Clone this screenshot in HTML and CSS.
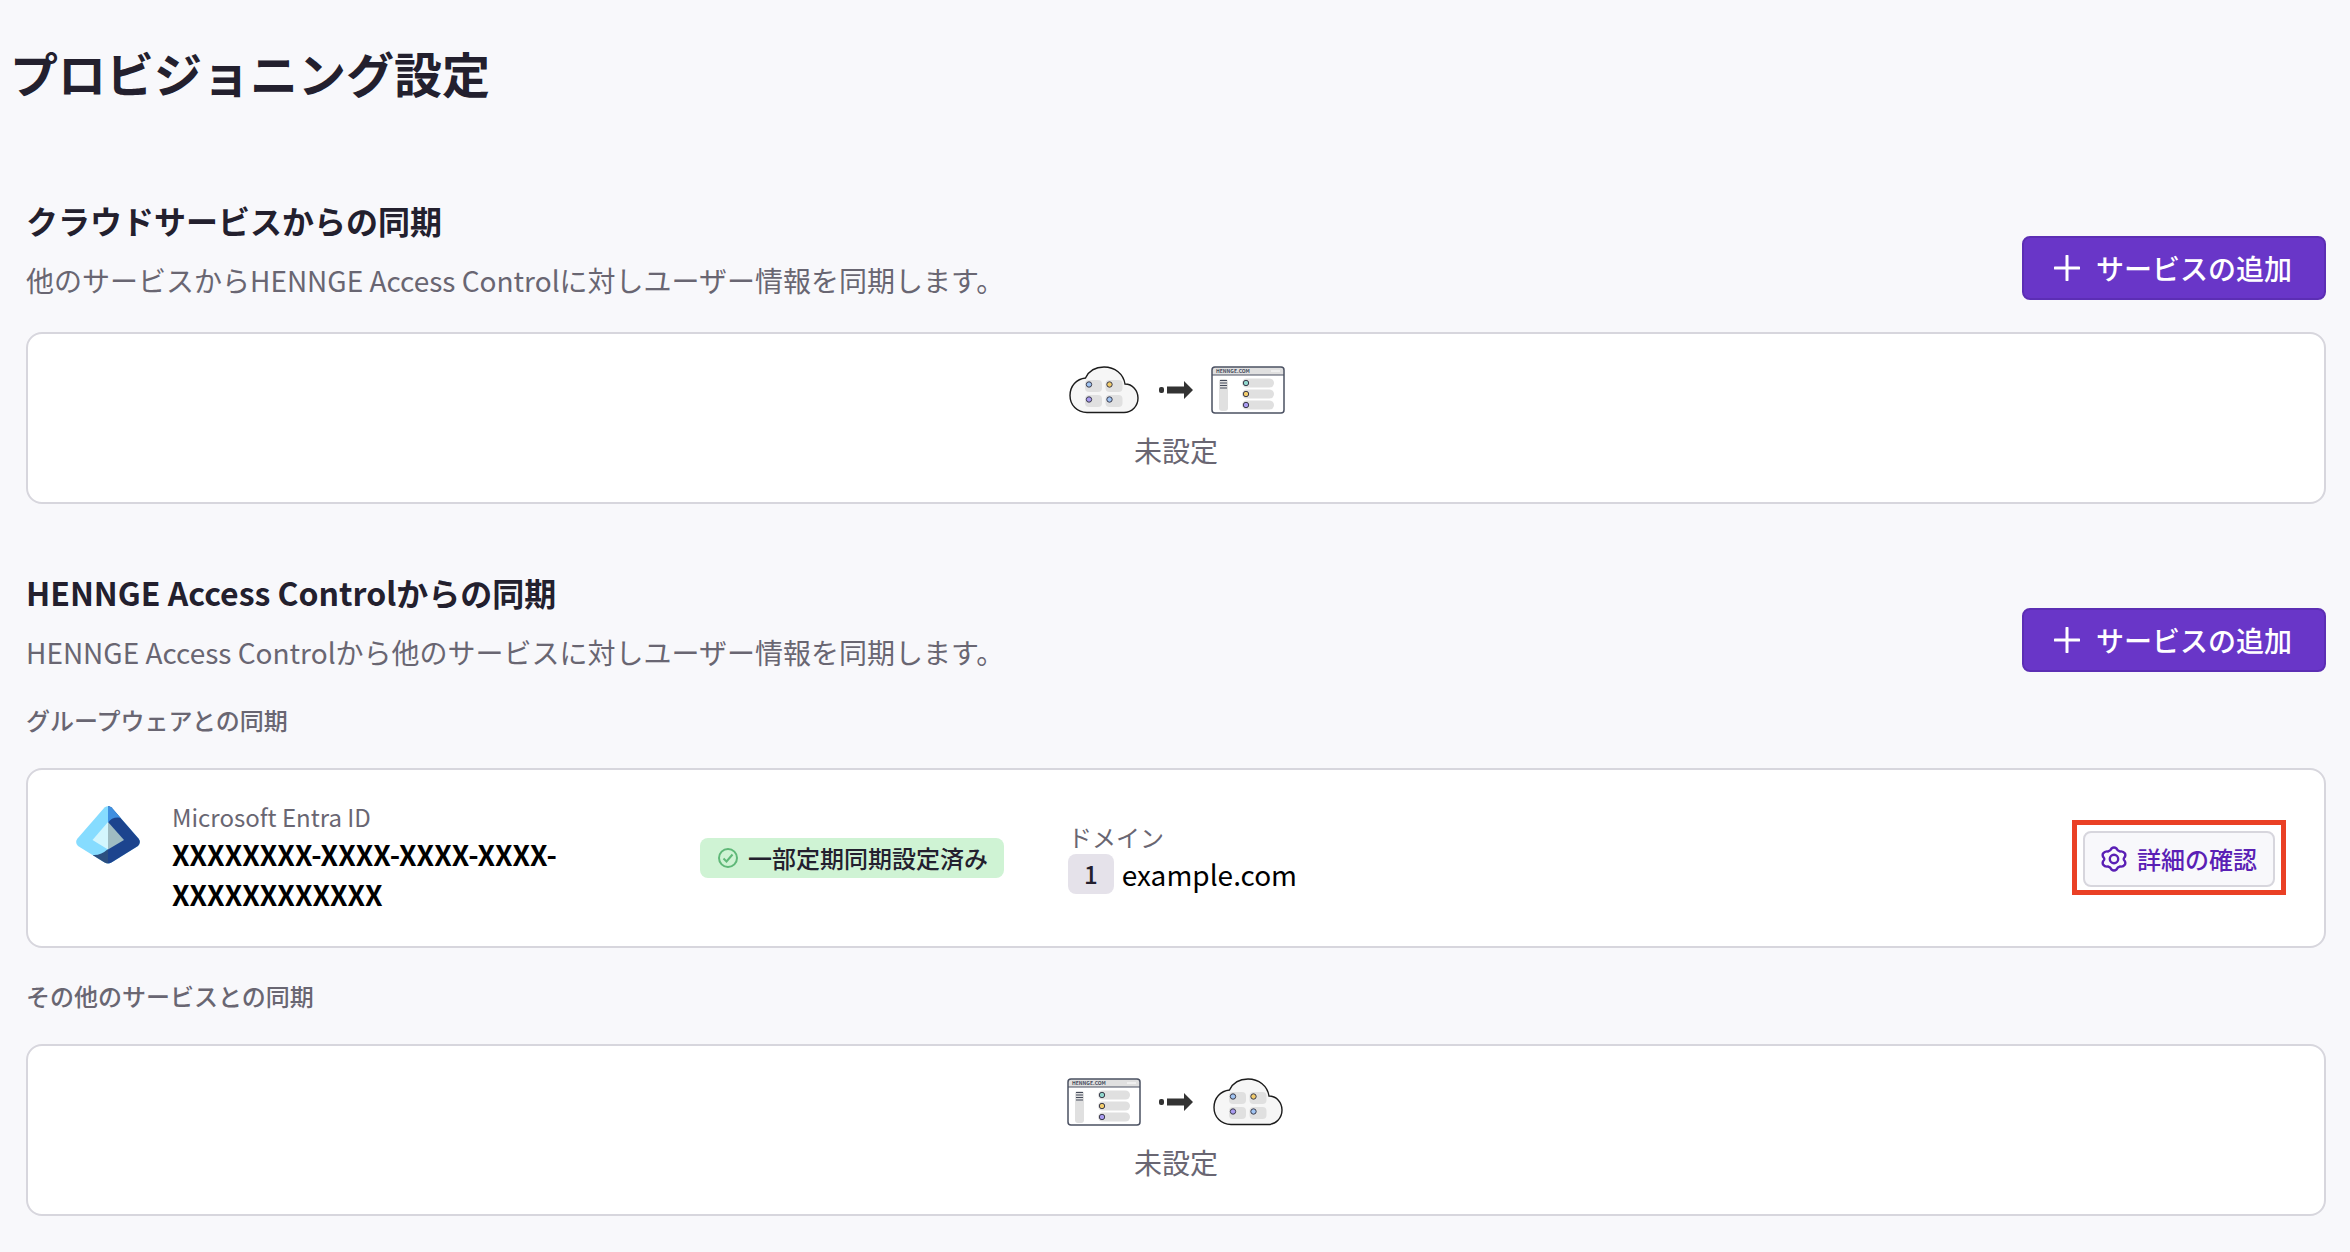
FILE: index.html
```html
<!DOCTYPE html>
<html lang="ja">
<head>
  <meta charset="UTF-8">
  <meta name="viewport" content="width=device-width, initial-scale=1.0">
  <title>プロビジョニング設定</title>
  <link rel="stylesheet" href="styles.css">
</head>
<body>
  <!-- Shared drawings -->
  <svg class="symbols" aria-hidden="true">
    <symbol id="plus" viewBox="0 0 26 26">
      <path d="M13 1v24M1 13h24" fill="none" stroke="currentColor" stroke-width="3" stroke-linecap="round"/>
    </symbol>
    <symbol id="cloud" viewBox="0 0 74 48">
      <path d="M20 46.500C10 46.500 3 39 3 29.500C3 20 9.500 13 18.500 12C22 4.500 29 1 37 1C48 1 56.500 8 58 18C65.500 18 71 24.500 71 32C71 40 65 46.500 57 46.500Z" fill="#f6f6f6" stroke="#1c1c1c" stroke-width="1.400"/>
      <g fill="#e0e0e0">
        <rect x="18" y="14" width="17" height="12" rx="4"/>
        <rect x="38.500" y="14" width="17" height="12" rx="4"/>
        <rect x="18" y="29" width="17" height="12" rx="4"/>
        <rect x="38.500" y="29" width="17" height="12" rx="4"/>
      </g>
      <g stroke="#3a3a4a" stroke-width="1">
        <circle cx="22" cy="18.500" r="2.700" fill="#a0c4f2"/>
        <circle cx="42.500" cy="18.500" r="2.700" fill="#f2cc6b"/>
        <circle cx="22" cy="33.500" r="2.700" fill="#a99bf0"/>
        <circle cx="42.500" cy="33.500" r="2.700" fill="#a0c4f2"/>
      </g>
    </symbol>
    <symbol id="arrow" viewBox="0 0 34 18">
      <rect x="0" y="6" width="5" height="6" rx="2" fill="#333"/>
      <path d="M8 5.500H25V0L34 9L25 18V12.500H8Z" fill="#333"/>
    </symbol>
    <symbol id="window" viewBox="0 0 74 48">
      <rect x="1" y="1" width="72" height="46" rx="3" fill="#fff"/>
      <path d="M1 9V4a3 3 0 0 1 3-3h66a3 3 0 0 1 3 3v5z" fill="#e0e0e0"/>
      <rect x="1" y="1" width="72" height="46" rx="3" fill="none" stroke="#4b5162" stroke-width="1.500"/>
      <path d="M1 9h72" stroke="#4b5162" stroke-width="1"/>
      <path d="M60 5h9" stroke="#fff" stroke-width="1"/>
      <text class="window-title" x="5" y="7">HENNGE.COM</text>
      <g fill="#e0e0e0">
        <rect x="8" y="13" width="9" height="32" rx="3"/>
        <rect x="31" y="12.500" width="32" height="9" rx="4.500"/>
        <rect x="31" y="23.500" width="32" height="9" rx="4.500"/>
        <rect x="31" y="34.500" width="32" height="9" rx="4.500"/>
      </g>
      <path d="M9 14.500h7M9 17h7M9 19.500h7M9 22h7" stroke="#444a5a" stroke-width="1"/>
      <g stroke="#3a3a4a" stroke-width="1">
        <circle cx="35" cy="17" r="2.700" fill="#8fd6cc"/>
        <circle cx="35" cy="28" r="2.700" fill="#f2cc6b"/>
        <circle cx="35" cy="39" r="2.700" fill="#a99bf0"/>
      </g>
    </symbol>
  </svg>

  <main class="page">
    <h1>プロビジョニング設定</h1>

    <!-- Inbound sync -->
    <section class="section">
      <div class="section-header">
        <div>
          <h2>クラウドサービスからの同期</h2>
          <p class="description">他のサービスからHENNGE Access Controlに対しユーザー情報を同期します。</p>
        </div>
        <button type="button" class="btn-primary">
          <svg class="icon" aria-hidden="true"><use href="#plus"/></svg>
          サービスの追加
        </button>
      </div>
      <div class="card empty">
        <div class="flow">
          <svg class="flow-item"><use href="#cloud"/></svg>
          <svg class="flow-arrow"><use href="#arrow"/></svg>
          <svg class="flow-item"><use href="#window"/></svg>
        </div>
        <p>未設定</p>
      </div>
    </section>

    <!-- Outbound sync -->
    <section class="section">
      <div class="section-header">
        <div>
          <h2>HENNGE Access Controlからの同期</h2>
          <p class="description">HENNGE Access Controlから他のサービスに対しユーザー情報を同期します。</p>
        </div>
        <button type="button" class="btn-primary">
          <svg class="icon" aria-hidden="true"><use href="#plus"/></svg>
          サービスの追加
        </button>
      </div>

      <h3>グループウェアとの同期</h3>
      <div class="card service">
        <div class="service-name">
          <svg class="logo" viewBox="0 0 64 58" aria-hidden="true">
            <defs>
              <clipPath id="entra"><path d="M28.500 1.500Q32 -1 35.500 1.500L62.500 32.500Q65.500 36.500 62 40L35.500 56.500Q32 58.500 28.500 56.500L2 40Q-1.500 36.500 1.500 32.500Z"/></clipPath>
            </defs>
            <g clip-path="url(#entra)">
              <rect width="64" height="58" fill="#86dcff"/>
              <path d="M32 0H64V58H32Z" fill="#1c448e"/>
              <path d="M32 0H46V12Q36 10 32 17Z" fill="#3f8fe0"/>
              <path d="M17 49Q25 49.500 32 43V58H17Z" fill="#2c4f7f"/>
              <path d="M32 16L16.500 34L32 43.500Z" fill="#d3f6fd"/>
              <path d="M32 16L48 34L32 43.500Z" fill="#9fbcc2"/>
            </g>
          </svg>
          <div>
            <p class="label">Microsoft Entra ID</p>
            <p class="tenant">XXXXXXXX-XXXX-XXXX-XXXX-XXXXXXXXXXXX</p>
          </div>
        </div>
        <div>
          <span class="status">
            <svg class="status-icon" viewBox="0 0 20 20" aria-hidden="true">
              <circle cx="10" cy="10" r="9"/>
              <path d="M5.500 10.500l3 3 6-7"/>
            </svg>
            一部定期同期設定済み
          </span>
        </div>
        <div>
          <p class="label">ドメイン</p>
          <p class="domain"><span class="count">1</span>example.com</p>
        </div>
        <div class="highlight">
          <button type="button" class="btn-detail">
            <svg class="icon" viewBox="0 0 26 26" aria-hidden="true">
              <path d="M10.500 2.500Q13 .500 15.500 2.500Q16.500 5 19 5.500Q22 4.800 24 7.500Q25 10 23 12Q22.500 13 23 14Q25 16 24 18.500Q22 21.200 19 20.500Q16.500 21 15.500 23.500Q13 25.500 10.500 23.500Q9.500 21 7 20.500Q4 21.200 2 18.500Q1 16 3 14Q3.500 13 3 12Q1 10 2 7.500Q4 4.800 7 5.500Q9.500 5 10.500 2.500Z" fill="none" stroke="currentColor" stroke-width="2.400" stroke-linejoin="round"/>
              <circle cx="13" cy="13" r="4.200" fill="none" stroke="currentColor" stroke-width="2.400"/>
            </svg>
            詳細の確認
          </button>
        </div>
      </div>

      <h3>その他のサービスとの同期</h3>
      <div class="card empty">
        <div class="flow">
          <svg class="flow-item"><use href="#window"/></svg>
          <svg class="flow-arrow"><use href="#arrow"/></svg>
          <svg class="flow-item"><use href="#cloud"/></svg>
        </div>
        <p>未設定</p>
      </div>
    </section>
  </main>
</body>
</html>
```
FILE: styles.css
```css
* {
  box-sizing: border-box;
}

body {
  margin: 0;
  background: #f8f8fb;
  color: #23202e;
  font-family: "Noto Sans CJK JP", sans-serif;
  font-size: 28px;
  line-height: 40px;
}

h1, h2, h3, p {
  margin: 0;
}

.symbols {
  display: none;
}

.window-title {
  font-size: 5px;
  font-weight: bold;
  fill: #444a5a;
}

.page {
  padding: 36px 24px 36px 10px;
}

h1 {
  font-size: 48px;
  line-height: 72px;
  font-weight: bold;
}

.section {
  margin-top: 64px;
  padding-left: 16px;
}

h1 + .section {
  margin-top: 88px;
}

.section-header {
  display: flex;
  justify-content: space-between;
  align-items: flex-end;
}

h2 {
  margin-bottom: 16px;
  font-size: 32px;
  line-height: 48px;
  font-weight: bold;
}

h3 {
  margin: 28px 0;
  color: #696672;
  font-size: 24px;
  line-height: 40px;
  font-weight: 500;
}

.description {
  color: #696672;
}

button {
  display: flex;
  align-items: center;
  font-family: inherit;
  font-weight: 500;
  white-space: nowrap;
  cursor: pointer;
}

.icon {
  width: 26px;
  height: 26px;
}

.btn-primary {
  gap: 16px;
  height: 64px;
  padding: 0 32px 0 30px;
  border: 2px solid #5c2eb4;
  border-radius: 8px;
  background: #6936c8;
  color: #fff;
  font-size: 28px;
}

.btn-detail {
  gap: 10px;
  height: 56px;
  padding: 0 16px;
  border: 2px solid #d7d6dd;
  border-radius: 8px;
  background: #f8f8fb;
  color: #5a1fb5;
  font-size: 24px;
}

.card {
  border: 2px solid #d7d6dd;
  border-radius: 16px;
  background: #fff;
}

.section-header + .card {
  margin-top: 32px;
}

.empty {
  padding: 32px;
  color: #696672;
  text-align: center;
}

.flow {
  display: flex;
  justify-content: center;
  align-items: center;
  gap: 18px;
  margin-bottom: 16px;
}

.flow-item {
  width: 74px;
  height: 48px;
}

.flow-arrow {
  width: 34px;
  height: 18px;
}

.service {
  display: grid;
  grid-template-columns: 592px 336px 1fr auto;
  column-gap: 32px;
  align-items: center;
  padding: 30px 38px 32px 48px;
}

.service-name {
  display: flex;
  gap: 32px;
}

.logo {
  flex-shrink: 0;
  width: 64px;
  height: 58px;
  margin-top: 6px;
}

.label {
  color: #696672;
  font-size: 24px;
  line-height: 34px;
}

.tenant {
  color: #000;
  font-weight: bold;
}

.status {
  display: inline-flex;
  align-items: center;
  gap: 10px;
  padding: 0 16px 0 18px;
  border-radius: 8px;
  background: #cff3d4;
  font-size: 24px;
  font-weight: 500;
}

.status-icon {
  width: 20px;
  height: 20px;
  fill: none;
  stroke: #5fb878;
  stroke-width: 2;
}

.domain {
  display: flex;
  align-items: center;
  gap: 8px;
  color: #000;
}

.count {
  padding: 0 16px;
  border-radius: 8px;
  background: #e5e2ea;
  color: #23202e;
  font-size: 24px;
  font-weight: 500;
}

/* red frame round the detail button */
.highlight {
  padding: 6px 6px 3px;
  border: 5px solid #ea4025;
}
```
